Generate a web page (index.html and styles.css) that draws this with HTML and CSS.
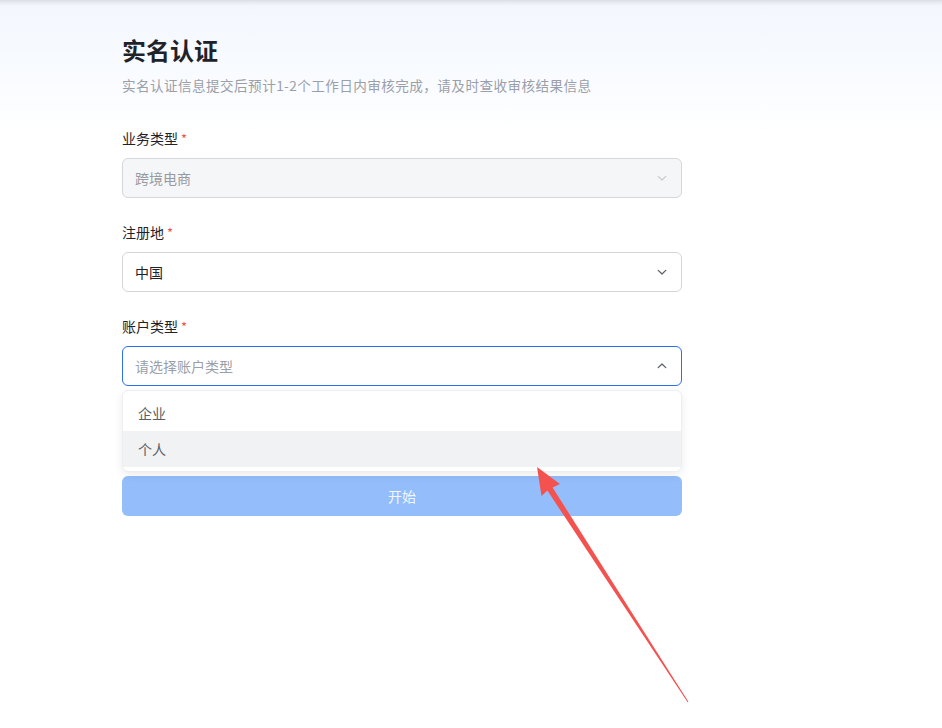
FILE: index.html
```html
<!DOCTYPE html>
<html lang="zh-CN">
<head>
<meta charset="utf-8">
<title>实名认证</title>
<link rel="stylesheet" href="styles.css">
</head>
<body>
<div class="page">
  <div class="form">
    <h1 class="title">实名认证</h1>
    <p class="subtitle">实名认证信息提交后预计1-2个工作日内审核完成，请及时查收审核结果信息</p>

    <div class="item">
      <div class="label">业务类型<span class="req">*</span></div>
      <div class="select disabled">
        <span class="value">跨境电商</span>
        <svg class="chev" width="12" height="12" viewBox="0 0 12 12"><path d="M2.2 4.4 6 8 9.8 4.4" fill="none" stroke="currentColor" stroke-width="1.2" stroke-linecap="round" stroke-linejoin="round"/></svg>
      </div>
    </div>

    <div class="item">
      <div class="label">注册地<span class="req">*</span></div>
      <div class="select">
        <span class="value">中国</span>
        <svg class="chev" width="12" height="12" viewBox="0 0 12 12"><path d="M2.2 4.4 6 8 9.8 4.4" fill="none" stroke="currentColor" stroke-width="1.3" stroke-linecap="round" stroke-linejoin="round"/></svg>
      </div>
    </div>

    <div class="item open-item">
      <div class="label">账户类型<span class="req">*</span></div>
      <div class="select focused">
        <span class="placeholder">请选择账户类型</span>
        <svg class="chev" width="12" height="12" viewBox="0 0 12 12"><path d="M2.2 7.6 6 4 9.8 7.6" fill="none" stroke="currentColor" stroke-width="1.3" stroke-linecap="round" stroke-linejoin="round"/></svg>
      </div>
      <div class="dropdown">
        <div class="option">企业</div>
        <div class="option hover">个人</div>
      </div>
    </div>

    <button class="submit" type="button">开始</button>
  </div>

  <svg class="arrow" width="942" height="728" viewBox="0 0 942 728">
    <polygon fill="#f4524f" points="537,467 560,484 552.6,487.6 688.4,701.8 687.6,702.2 547.4,490.6 541.5,496"/>
  </svg>
</div>
</body>
</html>
```

FILE: styles.css
```css
* { box-sizing: border-box; }
html, body { margin: 0; padding: 0; }
body {
  font-family: "Noto Sans CJK SC", "Noto Sans", "Liberation Sans", sans-serif;
  background: #fff;
  color: #1f2329;
}
.page {
  position: relative;
  width: 942px;
  height: 728px;
  overflow: hidden;
  background:
    linear-gradient(to bottom, rgba(0, 0, 0, 0.1) 0px, rgba(0, 0, 0, 0.04) 3px, rgba(0, 0, 0, 0) 6px),
    linear-gradient(to bottom, #f3f7fd 0px, #f7faff 60px, #ffffff 135px);
}
.form {
  margin-left: 122px;
  width: 560px;
  padding-top: 34px;
}
.title {
  margin: 0;
  font-size: 24px;
  line-height: 32px;
  font-weight: 700;
  color: #1f2329;
}
.subtitle {
  margin: 8px 0 0;
  font-size: 13.6px;
  letter-spacing: 0.42px;
  line-height: 22px;
  color: #9a9fa8;
}
.item {
  margin-top: 31px;
}
.item + .item { margin-top: 23px; }
.label {
  font-size: 14px;
  line-height: 22px;
  color: #1f2329;
  margin-bottom: 8px;
}
.req {
  color: #f0524f;
  margin-left: 3px;
  font-size: 13px;
}
.select {
  height: 40px;
  border: 1px solid #d4d6db;
  border-radius: 6px;
  background: #fff;
  display: flex;
  align-items: center;
  justify-content: space-between;
  padding: 0 13px 0 12px;
  font-size: 14px;
  color: #1f2329;
}
.select.disabled {
  background: #f5f6f8;
  color: #959aa3;
}
.select.disabled .chev { color: #c6c9cf; }
.select .chev { color: #5b6068; }
.select.focused {
  border-color: #2a6ff0;
}
.placeholder { color: #9a9fa8; }
.open-item { position: relative; }
.dropdown {
  position: absolute;
  left: 0;
  right: 0;
  top: 75px;
  background: #fff;
  border: 1px solid #eceef1;
  border-radius: 6px;
  box-shadow: 0 3px 10px rgba(0, 0, 0, 0.08);
  padding: 4px 0;
  z-index: 2;
}
.option {
  height: 36px;
  line-height: 36px;
  padding-left: 15px;
  font-size: 14px;
  color: #5a5f67;
}
.option.hover { background: #f1f2f4; }
.submit {
  display: block;
  width: 560px;
  height: 40px;
  margin-top: 90px;
  border: none;
  border-radius: 6px;
  background: #93bdfb;
  color: rgba(255, 255, 255, 0.9);
  font-family: inherit;
  font-size: 14px;
  padding: 0;
}
.arrow {
  position: absolute;
  left: 0;
  top: 0;
  pointer-events: none;
  z-index: 5;
}
```
